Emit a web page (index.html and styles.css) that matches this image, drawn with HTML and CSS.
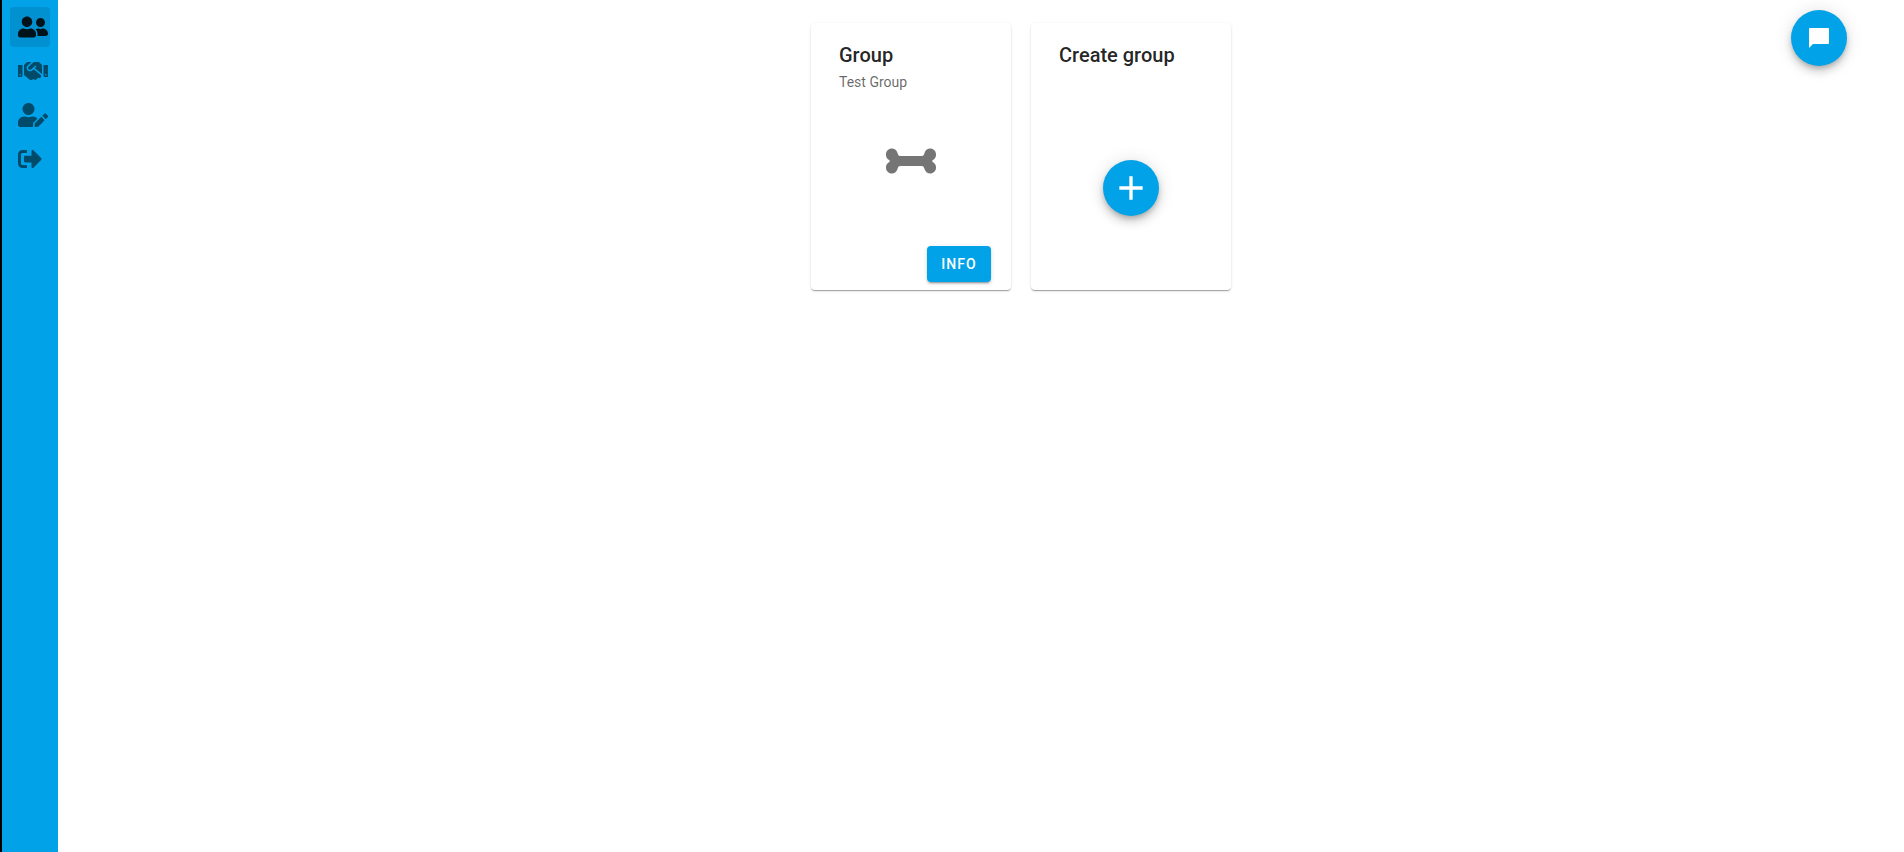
FILE: index.html
```html
<!DOCTYPE html>
<html lang="en">
<head>
<meta charset="utf-8">
<meta name="viewport" content="width=device-width, initial-scale=1">
<title>Groups</title>
<link rel="stylesheet" href="styles.css">
</head>
<body>
<nav class="sidebar" aria-label="Main">
  <a class="nav-item active" href="#groups" aria-label="Groups" aria-current="page">
    <svg class="icon" viewBox="0 0 640 512"><path d="M192 256c61.9 0 112-50.1 112-112S253.9 32 192 32 80 82.1 80 144s50.1 112 112 112zm76.8 32h-8.3c-20.8 10-43.9 16-68.5 16s-47.6-6-68.5-16h-8.3C51.6 288 0 339.6 0 403.2V432c0 26.5 21.5 48 48 48h288c26.5 0 48-21.5 48-48v-28.8c0-63.6-51.6-115.2-115.2-115.2zM480 256c53 0 96-43 96-96s-43-96-96-96-96 43-96 96 43 96 96 96zm48 32h-3.8c-13.9 4.8-28.6 8-44.2 8s-30.3-3.2-44.2-8H432c-20.4 0-39.2 5.9-55.7 15.4 24.4 26.3 39.7 61.2 39.7 99.8v38.4c0 2.2-.5 4.3-.6 6.4H592c26.5 0 48-21.5 48-48 0-61.9-50.1-112-112-112z"/></svg>
  </a>
  <a class="nav-item" href="#matches" aria-label="Matches">
    <svg class="icon" viewBox="0 0 640 512"><path d="M434.7 64h-85.9c-8 0-15.7 3-21.6 8.4l-98.3 90c-.1.1-.2.3-.3.4-16.6 15.6-16.3 40.5-2.1 56 12.7 13.9 39.4 17.6 56.1 2.7.1-.1.3-.1.4-.2l79.9-73.2c6.5-5.9 16.7-5.5 22.6 1 6 6.5 5.5 16.6-1 22.6l-26.1 23.9L504 313.8c2.9 2.4 5.5 5 7.9 7.7V128l-54.6-54.6c-5.9-6-14.1-9.4-22.6-9.4zM544 128.2v223.9c0 17.7 14.3 32 32 32h64V128.2h-96zm48 223.9c-8.8 0-16-7.2-16-16s7.2-16 16-16 16 7.2 16 16-7.2 16-16 16zM0 384h64c17.7 0 32-14.3 32-32V128.2H0V384zm48-63.9c8.8 0 16 7.2 16 16s-7.2 16-16 16-16-7.2-16-16c0-8.9 7.2-16 16-16zm435.9 18.6L334.6 217.5l-30 27.5c-29.7 27.1-75.2 24.5-101.7-4.4-26.9-29.4-24.8-74.9 4.4-101.7L289.1 64h-83.8c-8.5 0-16.6 3.4-22.6 9.4L128 128v223.9h18.3l90.5 81.9c27.4 22.3 67.7 18.1 90-9.3l.2-.2 17.9 15.5c15.9 13 39.4 10.5 52.3-5.4l31.4-38.6 5.4 4.4c13.7 11.1 33.9 9.1 45-4.7l9.5-11.7c11.2-13.8 9.1-33.9-4.6-45.1z"/></svg>
  </a>
  <a class="nav-item" href="#profile" aria-label="Edit profile">
    <svg class="icon" viewBox="0 0 640 512"><path d="M224 256c70.7 0 128-57.3 128-128S294.7 0 224 0 96 57.3 96 128s57.3 128 128 128zm89.6 32h-16.7c-22.2 10.2-46.9 16-72.9 16s-50.6-5.8-72.9-16h-16.7C60.2 288 0 348.2 0 422.4V464c0 26.5 21.5 48 48 48h274.9c-2.4-6.8-3.4-14-2.6-21.3l6.8-60.9 1.2-11.1 7.9-7.9 77.3-77.3c-24.5-27.7-60-45.5-99.9-45.5zm45.3 145.3l-6.8 61c-1.1 10.2 7.5 18.8 17.6 17.6l60.9-6.8 137.9-137.9-71.7-71.7-137.9 137.8zM633 268.9L595.1 231c-9.3-9.3-24.5-9.3-33.8 0l-37.8 37.8-4.1 4.1 71.8 71.7 41.8-41.8c9.3-9.4 9.3-24.5 0-33.9z"/></svg>
  </a>
  <a class="nav-item" href="#logout" aria-label="Log out">
    <svg class="icon" viewBox="0 0 512 512"><path d="M497 273L329 441c-15 15-41 4.5-41-17v-96H152c-13.3 0-24-10.7-24-24v-96c0-13.3 10.7-24 24-24h136V88c0-21.4 25.9-32 41-17l168 168c9.3 9.4 9.3 24.6 0 34zM192 436v-40c0-6.6-5.4-12-12-12H96c-17.7 0-32-14.3-32-32V160c0-17.7 14.3-32 32-32h84c6.6 0 12-5.4 12-12V76c0-6.6-5.4-12-12-12H96c-53 0-96 43-96 96v192c0 53 43 96 96 96h84c6.6 0 12-5.4 12-12z"/></svg>
  </a>
</nav>
<main class="content">
  <section class="card">
    <header class="card-header">
      <h2 class="card-title">Group</h2>
      <p class="card-subtitle">Test Group</p>
    </header>
    <div class="card-body">
      <svg class="bone" viewBox="0 0 640 512"><path d="M598.88 244.56c25.2-12.6 41.12-38.36 41.12-66.53v-7.64C640 129.3 606.7 96 565.61 96c-32.02 0-60.44 20.49-70.57 50.86-7.68 23.03-11.6 45.14-38.11 45.14H183.06c-27.38 0-31.58-25.54-38.11-45.14C134.83 116.49 106.4 96 74.39 96 33.3 96 0 129.3 0 170.39v7.64c0 28.17 15.92 53.93 41.12 66.53 9.43 4.71 9.43 18.17 0 22.88C15.92 280.04 0 305.8 0 333.97v7.64C0 382.7 33.3 416 74.38 416c32.02 0 60.44-20.49 70.57-50.86 7.68-23.03 11.6-45.14 38.11-45.14h273.87c27.38 0 31.58 25.54 38.11 45.14C505.17 395.51 533.6 416 565.61 416c41.08 0 74.38-33.3 74.38-74.39v-7.64c0-28.18-15.92-53.93-41.12-66.53-9.42-4.71-9.42-18.17.01-22.88z"/></svg>
    </div>
    <footer class="card-actions"><button class="button" type="button">INFO</button></footer>
  </section>
  <section class="card">
    <header class="card-header"><h2 class="card-title">Create group</h2></header>
    <div class="card-body card-body-create">
      <button class="fab" type="button" aria-label="Create group">
        <svg class="add" viewBox="0 0 24 24"><path d="M19 13h-6v6h-2v-6H5v-2h6V5h2v6h6z"/></svg>
      </button>
    </div>
  </section>
</main>
<button class="fab chat" type="button" aria-label="Open chat">
  <svg class="bubble" viewBox="0 0 24 24"><path d="M21 2H3a1 1 0 0 0-1 1v19l4-4h15a1 1 0 0 0 1-1V3a1 1 0 0 0-1-1z"/></svg>
</button>
</body>
</html>
```
FILE: styles.css
```css
* {
  box-sizing: border-box;
}

body {
  display: flex;
  min-height: 100vh;
  margin: 0;
  background: #fff;
  color: rgba(0, 0, 0, 0.87);
  font-family: Roboto, sans-serif;
}

svg {
  display: block;
  fill: currentColor;
}

.sidebar {
  display: flex;
  flex: none;
  flex-direction: column;
  gap: 4px;
  width: 58px;
  padding: 7px 8px;
  border-left: 2px solid #000;
  background: #02a2e8;
}

.nav-item {
  display: flex;
  align-items: center;
  width: 40px;
  height: 40px;
  padding-left: 8px;
  border-radius: 4px;
  color: rgba(0, 0, 0, 0.54);
}

.nav-item.active {
  background: rgba(0, 0, 0, 0.1);
  color: rgba(0, 0, 0, 0.87);
}

.icon {
  flex: none;
  height: 24px;
}

.content {
  display: flex;
  flex: 1;
  flex-wrap: wrap;
  align-items: flex-start;
  justify-content: center;
  gap: 20px;
  padding: 23px 0 23px 80px;
}

.card {
  display: flex;
  flex-direction: column;
  width: 200px;
  min-height: 267px;
  padding: 16px 0 0;
  border-radius: 4px;
  background: #fff;
  box-shadow: 0 2px 1px -1px rgba(0, 0, 0, 0.2), 0 1px 1px 0 rgba(0, 0, 0, 0.14), 0 1px 3px 0 rgba(0, 0, 0, 0.12);
}

.card-header {
  padding: 0 28px;
}

.card-title {
  margin: 0;
  font-size: 20px;
  font-weight: 500;
  line-height: 32px;
}

.card-subtitle {
  margin: 0;
  color: rgba(0, 0, 0, 0.6);
  font-size: 14px;
  line-height: 22px;
}

.card-body {
  display: flex;
  flex: 1;
  align-items: flex-start;
  justify-content: center;
  padding-top: 48px;
}

.card-body-create {
  padding-top: 89px;
}

.bone {
  height: 40px;
  color: #757575;
}

.card-actions {
  display: flex;
  justify-content: flex-end;
  padding: 8px 20px;
}

.button {
  min-width: 64px;
  height: 36px;
  padding: 0 12px;
  border: 0;
  border-radius: 4px;
  background: #02a2e8;
  box-shadow: 0 3px 1px -2px rgba(0, 0, 0, 0.2), 0 2px 2px 0 rgba(0, 0, 0, 0.14), 0 1px 5px 0 rgba(0, 0, 0, 0.12);
  color: #fff;
  font: 500 14px/36px Roboto, sans-serif;
  letter-spacing: 1px;
}

.fab {
  display: flex;
  align-items: center;
  justify-content: center;
  width: 56px;
  height: 56px;
  padding: 0;
  border: 0;
  border-radius: 50%;
  background: #02a2e8;
  box-shadow: 0 3px 5px -1px rgba(0, 0, 0, 0.2), 0 6px 10px 0 rgba(0, 0, 0, 0.14), 0 1px 18px 0 rgba(0, 0, 0, 0.12);
  color: #fff;
}

.add {
  width: 40px;
  height: 40px;
}

.bubble {
  width: 24px;
  height: 24px;
}

.chat {
  position: fixed;
  top: 10px;
  right: 57px;
}
```
